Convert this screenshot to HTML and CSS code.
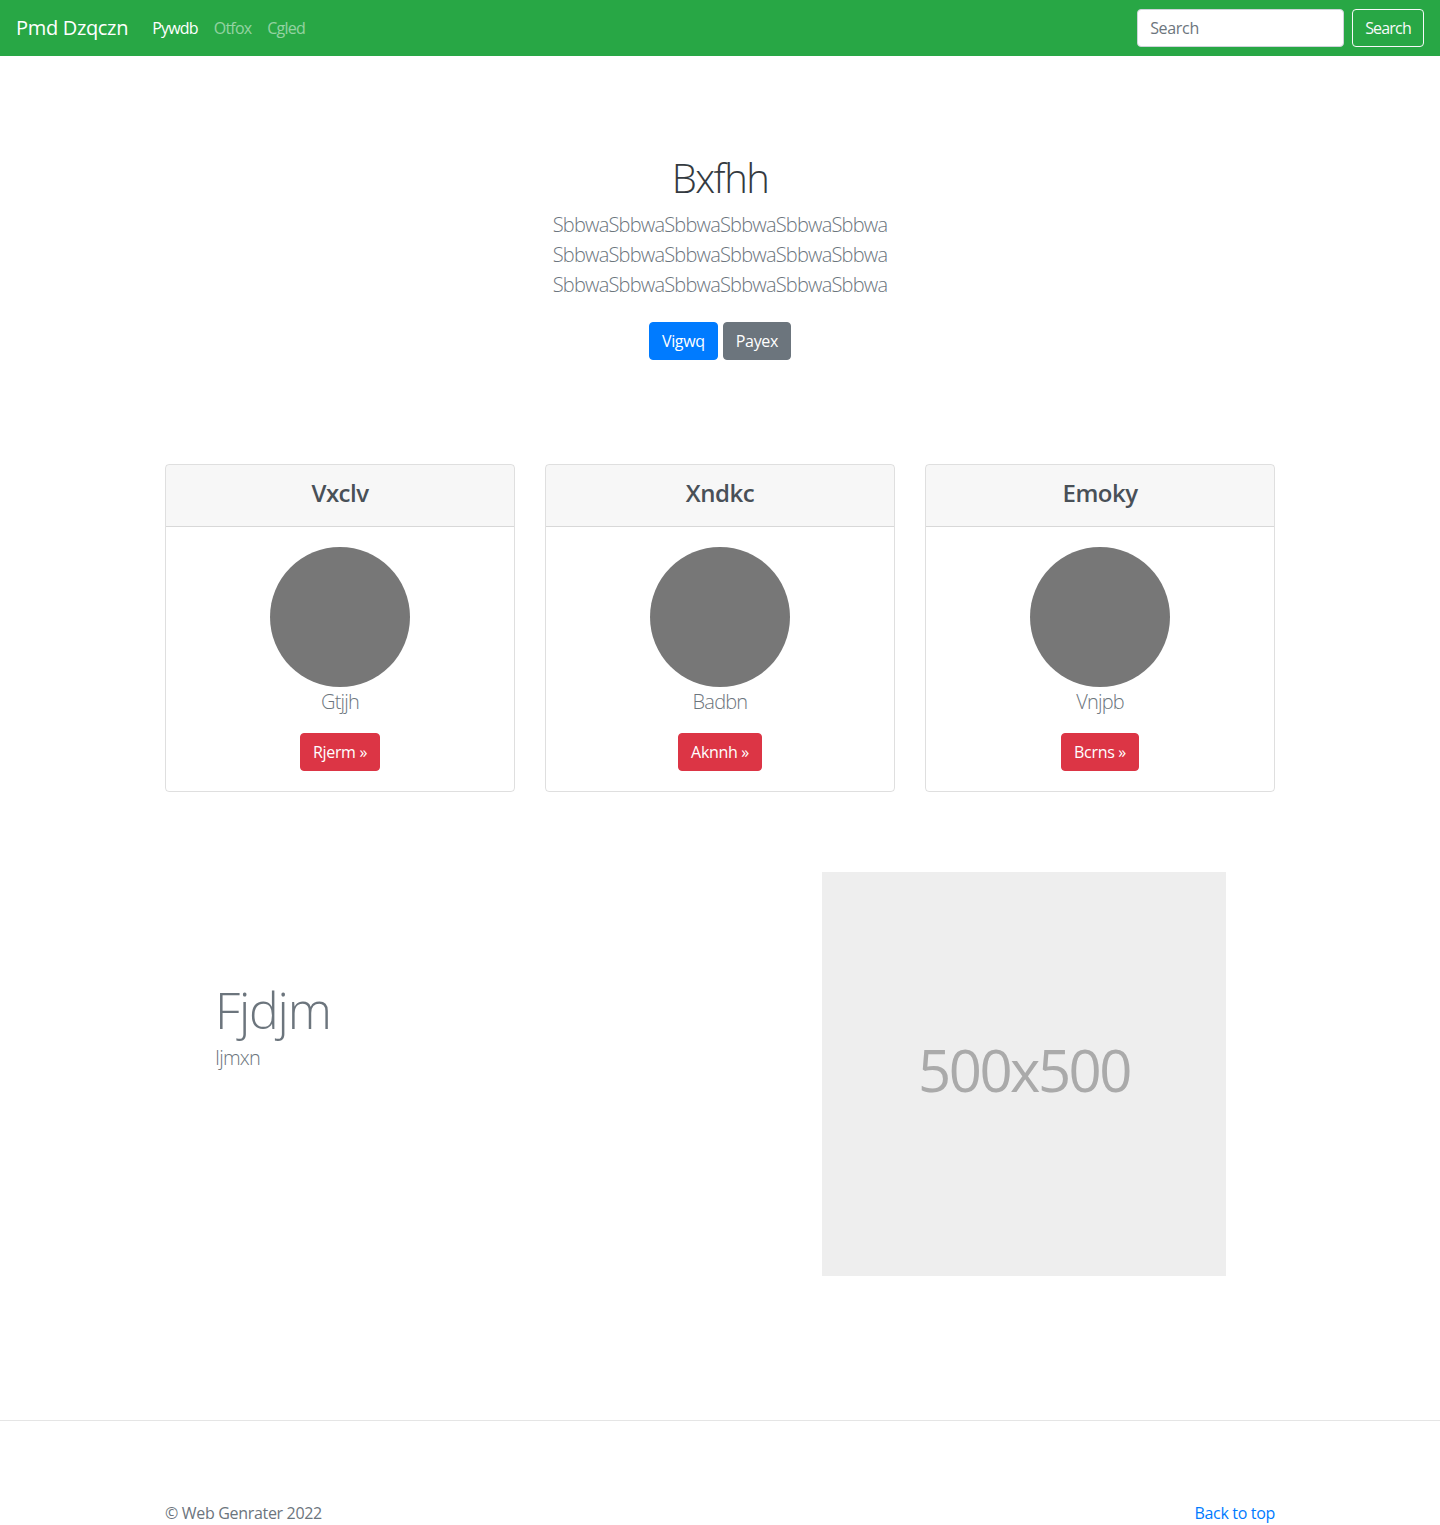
FILE: index.html
```html
<!DOCTYPE html>
<html lang="en">
<head>
<meta charset="utf-8">
<title>Pmd Dzqczn</title>
<link rel="stylesheet" href="styles.css">
</head>
<body>
<header class="navbar">
  <a class="brand" href="#">Pmd Dzqczn</a>
  <nav class="nav">
    <a class="nav-link active" href="#">Pywdb</a>
    <a class="nav-link" href="#">Otfox</a>
    <a class="nav-link" href="#">Cgled</a>
  </nav>
  <form class="search">
    <input class="search-input" type="text" placeholder="Search">
    <button class="btn btn-outline-light" type="button">Search</button>
  </form>
</header>

<section class="hero">
  <h1 class="hero-title">Bxfhh</h1>
  <p class="lead hero-lead">SbbwaSbbwaSbbwaSbbwaSbbwaSbbwa<br>SbbwaSbbwaSbbwaSbbwaSbbwaSbbwa<br>SbbwaSbbwaSbbwaSbbwaSbbwaSbbwa</p>
  <div class="hero-actions">
    <a class="btn btn-primary" href="#">Vigwq</a>
    <a class="btn btn-secondary" href="#">Payex</a>
  </div>
</section>

<section class="container cards">
  <div class="card">
    <div class="card-header"><h4 class="card-title">Vxclv</h4></div>
    <div class="card-body">
      <div class="avatar"></div>
      <p class="card-text">Gtjjh</p>
      <a class="btn btn-danger" href="#">Rjerm &raquo;</a>
    </div>
  </div>
  <div class="card">
    <div class="card-header"><h4 class="card-title">Xndkc</h4></div>
    <div class="card-body">
      <div class="avatar"></div>
      <p class="card-text">Badbn</p>
      <a class="btn btn-danger" href="#">Aknnh &raquo;</a>
    </div>
  </div>
  <div class="card">
    <div class="card-header"><h4 class="card-title">Emoky</h4></div>
    <div class="card-body">
      <div class="avatar"></div>
      <p class="card-text">Vnjpb</p>
      <a class="btn btn-danger" href="#">Bcrns &raquo;</a>
    </div>
  </div>
</section>

<section class="container featurette">
  <div class="featurette-text">
    <h2 class="featurette-heading">Fjdjm</h2>
    <p class="lead featurette-lead">Ijmxn</p>
  </div>
  <div class="placeholder">
    <span class="placeholder-text">500x500</span>
  </div>
</section>

<footer class="footer">
  <div class="container footer-inner">
    <p class="copyright">&copy; Web Genrater 2022</p>
    <a class="back-top" href="#">Back to top</a>
  </div>
</footer>
</body>
</html>
```

FILE: styles.css
```css
* { box-sizing: border-box; }

html, body {
  margin: 0;
  padding: 0;
}

body {
  font-family: "Open Sans", "Noto Sans", "Liberation Sans", sans-serif;
  font-size: 16px;
  line-height: 1.5;
  letter-spacing: -0.02em;
  color: #212529;
  background: #fff;
}

a { text-decoration: none; }

.container {
  width: 1110px;
  margin: 0 auto;
}

/* Navbar */
.navbar {
  height: 56px;
  background: #28a745;
  display: flex;
  align-items: center;
  padding: 8px 16px;
}

.brand {
  color: #fff;
  font-size: 20px;
  line-height: 30px;
  margin-right: 16px;
}

.nav {
  display: flex;
}

.nav-link {
  color: rgba(255, 255, 255, 0.5);
  padding: 8px;
  font-size: 16px;
  line-height: 24px;
  letter-spacing: -0.05em;
}

.nav-link.active { color: #fff; }

.search {
  margin-left: auto;
  display: flex;
  align-items: center;
}

.search-input {
  width: 207px;
  height: 38px;
  padding: 6px 12px;
  font-family: inherit;
  font-size: 16px;
  letter-spacing: -0.02em;
  color: #495057;
  border: 1px solid #ced4da;
  border-radius: 4px;
  margin-right: 8px;
  background: #fff;
}

.search-input::placeholder { color: #6c757d; }

/* Buttons */
.btn {
  display: inline-block;
  font-family: inherit;
  font-size: 16px;
  line-height: 24px;
  letter-spacing: -0.02em;
  padding: 6px 12px;
  border: 1px solid transparent;
  border-radius: 4px;
  color: #fff;
  cursor: pointer;
}

.btn-outline-light {
  background: transparent;
  border-color: #f8f9fa;
  color: #f8f9fa;
  letter-spacing: -0.05em;
}

.btn-primary { background: #007bff; border-color: #007bff; }
.btn-secondary { background: #6c757d; border-color: #6c757d; }
.btn-danger { background: #dc3545; border-color: #dc3545; }

/* Hero */
.hero {
  text-align: center;
  padding: 98px 0 104px;
}

.hero-title {
  margin: 0 0 8px;
  font-size: 40px;
  line-height: 1.2;
  font-weight: 300;
  letter-spacing: -1.5px;
  color: #343a40;
}

.lead {
  font-size: 20px;
  font-weight: 300;
  line-height: 1.5;
  letter-spacing: -0.8px;
}

.hero-lead {
  margin: 0;
  color: #6c757d;
}

.hero-actions {
  display: flex;
  justify-content: center;
  gap: 5px;
  margin-top: 22px;
}

/* Cards */
.cards {
  display: grid;
  grid-template-columns: repeat(3, 1fr);
  gap: 30px;
}

.card {
  border: 1px solid rgba(0, 0, 0, 0.125);
  border-radius: 4px;
  text-align: center;
  overflow: hidden;
}

.card-header {
  background: rgba(0, 0, 0, 0.03);
  border-bottom: 1px solid rgba(0, 0, 0, 0.125);
  padding: 14px 20px 12px;
}

.card-title {
  margin: 0 0 6px;
  font-size: 24px;
  line-height: 1.2;
  font-weight: 600;
  letter-spacing: -0.5px;
  color: #495057;
}

.card-body {
  padding: 20px;
  display: flex;
  flex-direction: column;
  align-items: center;
}

.avatar {
  width: 140px;
  height: 140px;
  border-radius: 50%;
  background: #777;
}

.card-text {
  margin: 0 0 16px;
  font-size: 20px;
  font-weight: 300;
  line-height: 30px;
  letter-spacing: -0.8px;
  color: #6c757d;
}

/* Featurette */
.featurette {
  display: flex;
  margin-top: 80px;
}

.featurette-text {
  padding-left: 50px;
  margin-top: 107px;
}

.featurette-heading {
  margin: 0 0 5px;
  font-size: 50px;
  line-height: 62px;
  font-weight: 300;
  letter-spacing: -1.2px;
  color: #6c757d;
}

.featurette-lead {
  margin: 0;
  line-height: 24px;
  color: #6c757d;
}

.placeholder {
  width: 404px;
  height: 404px;
  margin-left: auto;
  margin-right: 49px;
  padding-bottom: 8px;
  background: #eee;
  display: flex;
  align-items: center;
  justify-content: center;
}

.placeholder-text {
  color: #aaa;
  font-size: 58px;
  line-height: 1;
  letter-spacing: -2.5px;
}

/* Footer */
.footer {
  margin-top: 144px;
  border-top: 1px solid #e5e5e5;
  padding-top: 80px;
}

.footer-inner {
  display: flex;
  justify-content: space-between;
  align-items: baseline;
}

.copyright {
  margin: 0;
  color: #6c757d;
  font-size: 16px;
}

.back-top {
  color: #007bff;
  font-size: 16px;
}
```
